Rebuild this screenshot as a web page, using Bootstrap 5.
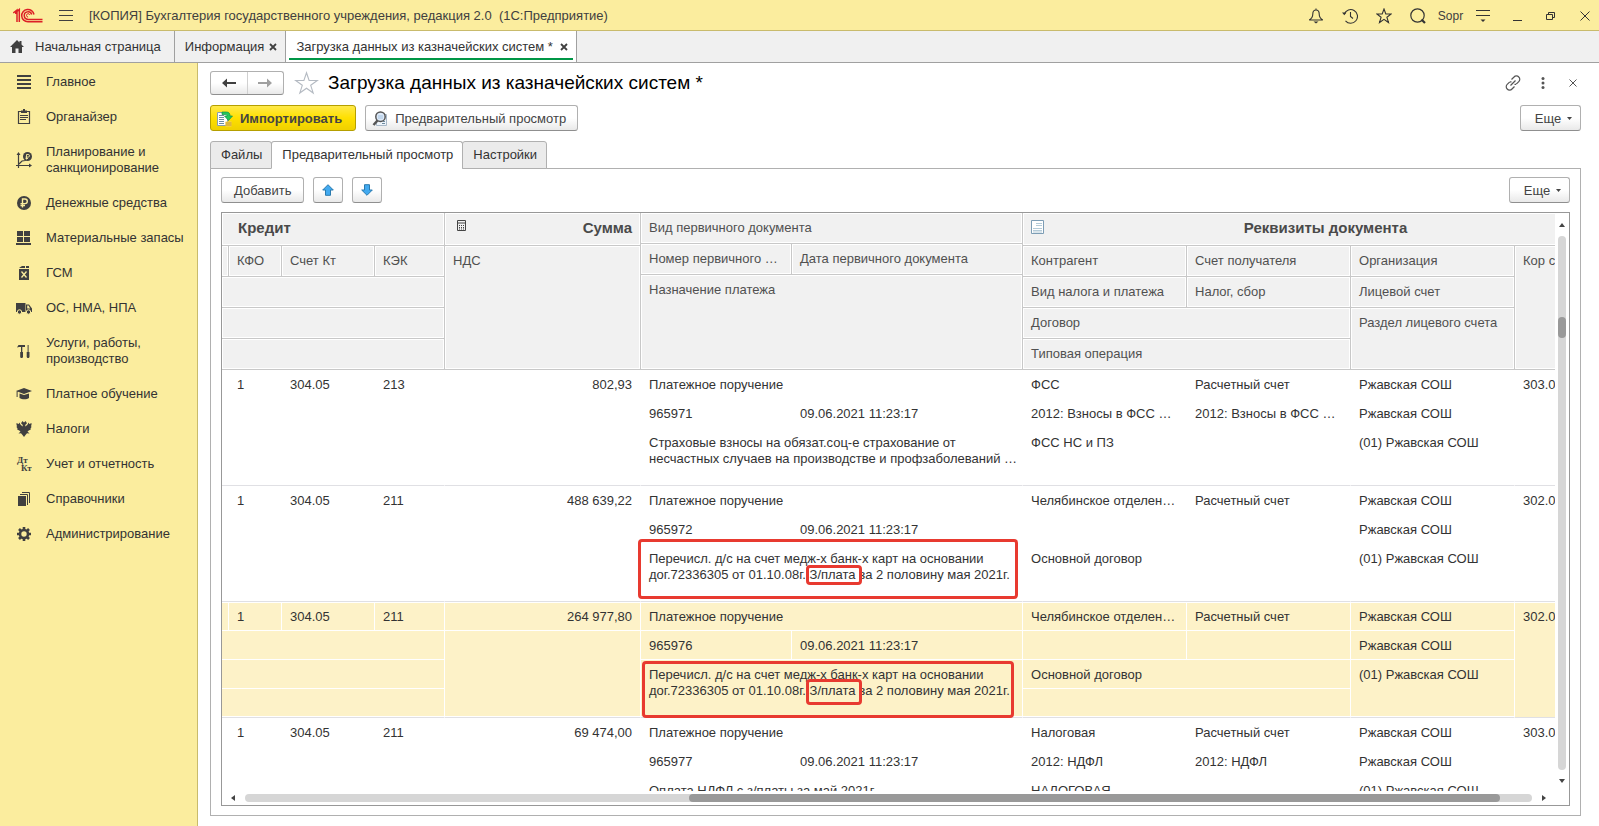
<!DOCTYPE html>
<html lang="ru">
<head>
<meta charset="utf-8">
<meta name="viewport" content="width=device-width, initial-scale=1">
<title>Загрузка данных из казначейских систем</title>
<link href="https://cdn.jsdelivr.net/npm/bootstrap@5.3.0/dist/css/bootstrap.min.css" rel="stylesheet">
<style>
  :root { --ink: #404040; --line: #a0a0a0; --soft: #c8c8c8; --yellow: #fbed9e; }
  body { font: 13px/16px "Liberation Sans", Arial, sans-serif; color: #333; background: #fff; }
  svg { display: block; flex: none; }
  button { font: inherit; color: inherit; }
  .plain { background: none; border: 0; padding: 0; }

  .topbar { height: 31px; background: var(--yellow); border-bottom: 1px solid #c9bb6c; padding: 1px 0 0 13px; color: var(--ink); }
  .topbar .tool { width: 34px; height: 30px; display: flex; align-items: center; justify-content: center; }
  .topbar .tool:last-child { width: 31px; padding-left: 3px; }
  .user { width: 31px; font-size: 12px; text-align: center; }

  .wintabs { height: 32px; background: #f0f0f0; border-bottom: 1px solid var(--line); }
  .wintabs a { display: flex; align-items: center; color: #333; text-decoration: none; border-right: 1px solid var(--line); padding: 0 8px 0 10px; gap: 5px; white-space: nowrap; }
  .wintabs a.home { padding-right: 13px; gap: 11px; }
  .wintabs a.current { background: #fff; position: relative; gap: 7px; }
  .wintabs a.current::after { content: ""; position: absolute; left: 3px; right: 3px; bottom: 2px; height: 2px; background: #009646; }

  .sections { width: 198px; background: var(--yellow); border-right: 1px solid #c9bb6c; padding-top: 2px; }
  .sections a { display: flex; align-items: center; gap: 14px; padding: 9px 8px 10px 16px; color: #333; text-decoration: none; }

  .workarea { padding: 8px 18px 10px 12px; min-width: 0; }
  .cmd { height: 26px; border: 1px solid #b0b0b0; border-bottom-color: #8f8f8f; border-radius: 3px; background: linear-gradient(#fff 50%, #e9e9e9); padding: 1px 12px 0; color: #444; display: inline-flex; align-items: center; justify-content: center; white-space: nowrap; }
  .cmd.withicon { padding: 1px 11px 0 6px; gap: 7px; }
  .cmd.main { background: linear-gradient(#ffe94a, #ffe000 50%, #efd000); border-color: #b59f00; font-weight: bold; padding-right: 13px; }
  .cmd.arrow { width: 30px; padding: 0; }
  .cmd.more { width: 61px; padding: 1px 0 0 6px; gap: 6px; }
  .cmd.navpair { height: 24px; width: 74px; padding: 0; }
  .bar { display: flex; flex-shrink: 0; gap: 9px; }
  .navpair button { flex: 1; height: 22px; display: flex; align-items: center; justify-content: center; }
  .navpair button + button { border-left: 1px solid #d0d0d0; }
  h1.form-title { font-size: 19px; line-height: 24px; font-weight: normal; color: #000; margin: 0; }
  .head-tools { margin-right: -7px; }
  .head-tools button { width: 30px; height: 24px; display: flex; align-items: center; justify-content: center; }

  .pages { margin-bottom: -1px; position: relative; }
  .pages button { height: 28px; border: 1px solid #b0b0b0; border-radius: 3px 3px 0 0; background: #ebebeb; padding: 0 9px 0 10px; color: #333; }
  .pages button + button { margin-left: -1px; }
  .pages button.current { background: #fff; border-bottom-color: #fff; }
  .page-body { border: 1px solid #b0b0b0; padding: 8px 10px 9px; min-height: 0; }

  .gridbox { border: 1px solid #989898; min-height: 0; margin-top: 9px; }
  .gridview { overflow: hidden; min-width: 0; }
  .vbar { width: 14px; padding: 10px 0 8px; align-items: center; }
  .vbar .track { width: 8px; border-radius: 4px; background: #d6d6d6; padding-top: 81px; margin: 9px 0; }
  .vbar .thumb { width: 8px; height: 21px; border-radius: 4px; background: #999; }
  .hbar { height: 14px; padding: 0 23px 0 9px; align-items: center; gap: 10px; }
  .hbar .track { height: 8px; border-radius: 4px; background: #d6d6d6; }
  .hbar .thumb { height: 8px; width: 63%; margin-left: 34.5%; border-radius: 4px; background: #999; }

  .docs { table-layout: fixed; width: 1386px; min-width: 100%; border-collapse: separate; border-spacing: 0; }
  .docs th, .docs td { vertical-align: top; text-align: left; white-space: nowrap; overflow: hidden; padding: 7px 0 0 8px; }
  .docs th { font-weight: normal; color: #505050; background: #f1f1f1; border: solid var(--soft); border-width: 0 1px 1px 0; box-shadow: inset 0 0 0 1px #fff; }
  .docs th.group { font-size: 15px; font-weight: bold; color: #4a4a4a; }
  .docs td { border: solid transparent; border-width: 0 1px 1px 0; }
  .docs td.num { text-align: right; padding-right: 8px; }
  .docs tbody tr { height: 29px; }
  .docs tbody td.low, .docs tbody tr:last-child td { border-bottom-color: #e0e0e4; }
  .docs .picked td { background: #fdf2c8; border-color: #fff; }
  .docs .picked tr:first-child td { box-shadow: inset 0 1px #fff; }
  .docs .picked td.low { box-shadow: inset 0 -1px #fff; }
  .docs td.noted { overflow: visible; position: relative; }
  .frame { position: absolute; border: 3px solid #e83a30; border-radius: 4px; z-index: 1; pointer-events: none; }
  .wide-a { left: -3px; right: 4px; top: -5px; bottom: 2px; }
  .wide-b { left: 1px; right: 8px; top: 1px; bottom: -1px; }
  .small-a { left: -4px; right: -6px; top: -2px; bottom: -3px; }
  .small-b { left: -4px; right: -6px; top: -4px; bottom: -7px; }
</style>
</head>
<body class="vh-100 overflow-hidden d-flex flex-column">

<header class="topbar d-flex align-items-center flex-shrink-0">
  <svg width="30" height="16" viewBox="0 0 30 16" fill="none" stroke="#dc1f26" stroke-width="1.5"><path d="M.3 5 4 2V14M2.800 6V4.500L6.300 1.500V14" /><path d="M21 6.500A6.200 6.200 0 1 0 15 13.800H29.500"/><path d="M18.700 6.500A3.800 3.800 0 1 0 15 11.400H29.500"/><path d="M16.800 6.800a1.700 1.700 0 1 0-1.700 2.300" stroke-width="1"/></svg>
  <button class="plain mx-3" aria-label="Меню"><svg width="14" height="12" viewBox="0 0 14 12" stroke="#404040" stroke-width="1"><path d="M0 .5h14M0 5.500h14M0 10.500h14"/></svg></button>
  <span class="text-nowrap">[КОПИЯ] Бухгалтерия государственного учреждения, редакция 2.0 &nbsp;(1С:Предприятие)</span>
  <div class="ms-auto d-flex align-items-center">
    <button class="plain tool" aria-label="Уведомления"><svg width="16" height="16" viewBox="0 0 16 16" fill="none" stroke="#333" stroke-width="1.1"><path d="M8 .5v1.500M8 2C5.800 2 4.800 3.800 4.800 6c0 3-1.300 4.800-3.600 6h13.600c-2.300-1.200-3.600-3-3.600-6 0-2.200-1-4-3.200-4z"/><path d="M5.500 13.500h5L8 15.500z" fill="#333" stroke="none"/></svg></button>
    <button class="plain tool" aria-label="История"><svg width="16" height="16" viewBox="0 0 16 16" fill="none" stroke="#333" stroke-width="1.1"><path d="M2.300 6A6.800 6.800 0 1 1 3.500 12.800M8.500 4v4.500l2.500 2"/><path d="M0 4.500h4.500L2.300 7.200z" fill="#333" stroke="none"/></svg></button>
    <button class="plain tool" aria-label="Избранное"><svg width="16" height="16" viewBox="0 0 16 16" fill="none" stroke="#333" stroke-width="1.1"><path d="m8 1 1.800 5h5.400l-4.300 3.200 1.600 5.300L8 11.300l-4.500 3.200 1.600-5.300L.8 6h5.400z"/></svg></button>
    <button class="plain tool" aria-label="Поиск"><svg width="16" height="16" viewBox="0 0 16 16" fill="none" stroke="#333" stroke-width="1.200"><circle cx="7.500" cy="7.500" r="6.700"/><path d="m11.500 11.500 3.500 3.500" stroke-width="2.200"/></svg></button>
    <span class="user">Sopr</span>
    <button class="plain tool" aria-label="Настройки окна"><svg width="14" height="14" viewBox="0 0 14 14"><path d="M0 1.500h14M0 6.500h14" stroke="#333" stroke-width="1.200"/><path d="M4.500 10.500h5L7 13z" fill="#333"/></svg></button>
    <button class="plain tool" aria-label="Свернуть"><svg width="9" height="10" viewBox="0 0 9 10"><path d="M0 9.500h9" stroke="#333"/></svg></button>
    <button class="plain tool" aria-label="Восстановить"><svg width="10" height="10" viewBox="0 0 10 10" fill="none" stroke="#333"><path d="M.5 3.500h6v5h-6zM2.500 3.500v-2h6v5h-2"/></svg></button>
    <button class="plain tool" aria-label="Закрыть"><svg width="10" height="10" viewBox="0 0 10 10"><path d="m.5.5 9 9m0-9-9 9" stroke="#333"/></svg></button>
  </div>
</header>

<nav class="wintabs d-flex flex-shrink-0" aria-label="Открытые окна">
  <a href="#" class="home"><svg width="14" height="13" viewBox="0 0 14 13" fill="#404040"><path d="M7 0 0 7h2v6h3.500V8.500h3V13H12V7h2L11.500 4.500V1h-2v1.500z"/></svg>Начальная страница</a>
  <a href="#">Информация <svg width="8" height="8" viewBox="0 0 8 8"><path d="m1 1 6 6m0-6L1 7" stroke="#404040" stroke-width="1.800"/></svg></a>
  <a href="#" class="current">Загрузка данных из казначейских систем * <svg width="8" height="8" viewBox="0 0 8 8"><path d="m1 1 6 6m0-6L1 7" stroke="#404040" stroke-width="1.800"/></svg></a>
</nav>

<div class="d-flex flex-grow-1" style="min-height:0">
  <nav class="sections flex-shrink-0" aria-label="Разделы">
    <a href="#"><svg width="16" height="16" viewBox="0 0 16 16" stroke="#404040" stroke-width="2"><path d="M1 2h14M1 6h14M1 10h14M1 14h14"/></svg>Главное</a>
    <a href="#"><svg width="16" height="16" viewBox="0 0 16 16" fill="none" stroke="#404040"><path d="M2.500 2.500h11v12h-11z" stroke-width="1.200"/><path d="M4 6.500h8M4 8.500h8M4 10.500h6"/><path d="M5 1.500h6V4H5z" fill="#404040" stroke="none"/><path d="M8 0v2" stroke-width="2"/></svg>Органайзер</a>
    <a href="#"><svg width="16" height="16" viewBox="0 0 16 16" fill="none" stroke="#404040" stroke-width="1.200"><path d="M2.500 16V2M0 13.500h14M3 12l3-3 3-.500 2-2"/><path d="M.5 3h4l-2-3zM13 11.500v4l3-2z" fill="#404040" stroke="none"/><circle cx="11.500" cy="4.500" r="4.500" fill="#404040" stroke="none"/><path d="M10.500 7.500v-5h1.700a1.200 1.200 0 0 1 0 2.600H9.500M9.500 6.500h2.500" stroke="#fbed9e" stroke-width=".9"/></svg>Планирование и<br>санкционирование</a>
    <a href="#"><svg width="16" height="16" viewBox="0 0 16 16" fill="none"><circle cx="8" cy="8" r="7" fill="#404040"/><path d="M6.500 12.500V4H9a2.300 2.300 0 0 1 0 4.600H4.500M4.500 10.500H9" stroke="#fbed9e" stroke-width="1.400"/></svg>Денежные средства</a>
    <a href="#"><svg width="16" height="16" viewBox="0 0 16 16" fill="#404040"><path d="M1 1h6v5H1zM8 1h6v5H8zM1 7h6v5H1zM8 7h6v5H8zM0 13h15v2H0z"/></svg>Материальные запасы</a>
    <a href="#"><svg width="16" height="16" viewBox="0 0 16 16"><path d="M3 4h10v11H3zM3 3l3-2h3v2zM10 1h3v2h-3z" fill="#404040"/><path d="m5.500 6.500 5 6m0-6-5 6" stroke="#fbed9e" stroke-width="1.300"/></svg>ГСМ</a>
    <a href="#"><svg width="16" height="16" viewBox="0 0 16 16" fill="#404040"><path d="M0 3h9.500v9H0z"/><path d="M10 4.500h3l3 4V12h-6zm1.200 1v3h3L12.500 5.500z" fill-rule="evenodd"/><circle cx="3.500" cy="12" r="2.200" stroke="#fbed9e"/><circle cx="12.500" cy="12" r="2.200" stroke="#fbed9e"/></svg>ОС, НМА, НПА</a>
    <a href="#"><svg width="16" height="16" viewBox="0 0 16 16" fill="#404040"><path d="M1 4.500 2.500 2H9v2H6.300v5H5V4H3zM4.200 9h2.800v5l-.7 1H4.800l-.6-1zM11.600 2h1v7h-1zM10.700 9h2.800v5l-.7 1h-1.400l-.7-1z"/></svg>Услуги, работы,<br>производство</a>
    <a href="#"><svg width="16" height="16" viewBox="0 0 16 16" fill="#404040"><path d="m8 2 8 3-8 3-8-3zM3.500 7.500 8 9l5-1.500V12c-2 1.800-7 1.800-9.500 0zM.6 5.500h1V11h-1z"/></svg>Платное обучение</a>
    <a href="#"><svg width="16" height="16" viewBox="0 0 16 16" fill="#404040"><path d="M8 1.500 9.500 0 11 2.200 9.200 4l.3 1.500L12 3V1.500L13.500 3 15.500 2v2l-.5 1 .5 1-1 1.500.3 1-2 1-1.300 1 2 2-2.500-.300L9.500 14 8 16l-1.500-2-1.500-1.800-2.500.3 2-2-1.300-1-2-1 .3-1L.5 6 1 5 .5 4V2l2 1L4 1.500V3l2.500 2.500L6.800 4 5 2.200 6.500 0z"/></svg>Налоги</a>
    <a href="#"><svg width="16" height="16" viewBox="0 0 16 16" fill="#404040" font-family="Liberation Serif, serif" font-weight="bold" font-size="9"><text x="1" y="7">Дт</text><text x="5" y="15">Кт</text></svg>Учет и отчетность</a>
    <a href="#"><svg width="16" height="16" viewBox="0 0 16 16" fill="none" stroke="#404040"><path d="M2 5h8v10H2z" fill="#404040" stroke="none"/><path d="M4 3.500h7.500V14M6 1.500h7.500V12"/></svg>Справочники</a>
    <a href="#"><svg width="16" height="16" viewBox="0 0 16 16" fill="none" stroke="#404040"><circle cx="8" cy="8" r="4" stroke-width="2.600"/><path d="M8 1v2.500M8 12.500V15M1 8h2.500M12.500 8H15M3 3l2 2M11 11l2 2M13 3l-2 2M5 11l-2 2" stroke-width="2.600"/></svg>Администрирование</a>
  </nav>

  <main class="workarea flex-grow-1 d-flex flex-column">
    <div class="d-flex align-items-center flex-shrink-0">
      <div class="cmd navpair">
        <button class="plain" aria-label="Назад"><svg width="14" height="10" viewBox="0 0 14 10" fill="#404040"><path d="M0 5 5 .5V4h9v2H5v3.500z"/></svg></button>
        <button class="plain" aria-label="Вперед"><svg width="14" height="10" viewBox="0 0 14 10" fill="#a0a0a0"><path d="M14 5 9 .5V4H0v2h9v3.500z"/></svg></button>
      </div>
      <button class="plain mx-2" aria-label="В избранное"><svg width="28" height="24" viewBox="0 0 28 24" fill="none" stroke="#b4bac2" stroke-width="1.100"><path d="m14.500 1.800 2.600 7.700h8.200l-6.600 4.800 2.500 7.700-6.700-4.800L7.800 22l2.500-7.700-6.600-4.800h8.200z"/></svg></button>
      <h1 class="form-title text-nowrap">Загрузка данных из казначейских систем *</h1>
      <div class="head-tools ms-auto d-flex">
        <button class="plain" aria-label="Ссылка"><svg width="16" height="16" viewBox="0 0 16 16" fill="none" stroke="#555" stroke-width="1.200"><path d="M6.500 4.500 9 2a3.200 3.200 0 0 1 4.800 0 3.200 3.200 0 0 1 0 4.600l-2.600 2.600M9.500 11.500 7 14a3.200 3.200 0 0 1-4.800 0 3.200 3.200 0 0 1 0-4.600l2.600-2.600M5.500 10.500l5-5M9.500 9.300l1.500.100M5 6.800l1.500.100"/></svg></button>
        <button class="plain" aria-label="Действия"><svg width="4" height="12" viewBox="0 0 4 12" fill="#555"><circle cx="2" cy="1.600" r="1.500"/><circle cx="2" cy="6" r="1.500"/><circle cx="2" cy="10.400" r="1.500"/></svg></button>
        <button class="plain" aria-label="Закрыть форму"><svg width="8" height="8" viewBox="0 0 8 8"><path d="m.5.5 7 7m0-7-7 7" stroke="#555"/></svg></button>
      </div>
    </div>

    <div class="bar" style="padding:10px 0">
      <button class="cmd withicon main"><svg width="16" height="16" viewBox="0 0 16 16"><path d="M.5 1.500h10v13H.5z" fill="#fff" stroke="#8aa0b0"/><path d="M2 4.500h5M2 6.500h5M2 8.500h5M2 10.500h5M2 12.500h5" stroke="#6d8ba0"/><path d="M5 1h4.500c2.500 0 3.500 1.500 3.500 4h2.500L11.500 9.500 7.500 5H10c0-1.200-.5-1.500-2-1.500H5z" fill="#23c85a" stroke="#12904a" stroke-width=".7"/><path d="M8.500 10.500h6v5h-6z" fill="#f6d35c"/><path d="M8.500 12h6M8.500 14h6" stroke="#c79a1c"/></svg>Импортировать</button>
      <button class="cmd withicon"><svg width="16" height="16" viewBox="0 0 16 16" fill="none"><path d="M4.500 3.500h10v11h-10z" fill="#eef4fa" stroke="#a8b8c8"/><path d="M10 12.500h3M11 10.500h2" stroke="#6d8ba0"/><circle cx="8.500" cy="5.700" r="4.700" fill="#dce9f8" stroke="#555" stroke-width="1.500"/><path d="M6 5h5M6 7h5" stroke="#a8c4e0"/><path d="m5.500 9.500-4 4.500" stroke="#555" stroke-width="2.500"/></svg>Предварительный просмотр</button>
      <button class="cmd more ms-auto">Еще <svg width="5" height="3" viewBox="0 0 5 3"><path d="M0 0h5L2.500 3z" fill="#444"/></svg></button>
    </div>

    <div class="pages d-flex flex-shrink-0" role="tablist">
      <button role="tab">Файлы</button>
      <button role="tab" class="current" aria-selected="true">Предварительный просмотр</button>
      <button role="tab">Настройки</button>
    </div>

    <section class="page-body flex-grow-1 d-flex flex-column">
      <div class="bar">
        <button class="cmd">Добавить</button>
        <button class="cmd arrow" aria-label="Вверх"><svg width="12" height="12" viewBox="0 0 12 12"><path d="m6 .7 5.300 5.300H8.500v5.300h-5V6H.7z" fill="#42aaf0" stroke="#2a7aae"/></svg></button>
        <button class="cmd arrow" aria-label="Вниз"><svg width="12" height="12" viewBox="0 0 12 12"><path d="M6 11.300.7 6h2.800V.7h5V6h2.800z" fill="#42aaf0" stroke="#2a7aae"/></svg></button>
        <button class="cmd more ms-auto">Еще <svg width="5" height="3" viewBox="0 0 5 3"><path d="M0 0h5L2.500 3z" fill="#444"/></svg></button>
      </div>

      <div class="gridbox flex-grow-1 d-flex flex-column">
        <div class="d-flex flex-grow-1" style="min-height:0">
          <div class="gridview flex-grow-1">
            <table class="docs">
              <colgroup><col style="width:7px"><col style="width:53px"><col style="width:93px"><col style="width:70px"><col style="width:196px"><col style="width:151px"><col style="width:231px"><col style="width:164px"><col style="width:164px"><col style="width:164px"><col></colgroup>
              <thead>
                <tr style="height:31px"><th class="group" colspan="4" rowspan="2"><span class="ps-2">Кредит</span></th><th class="group" rowspan="2"><div class="d-flex align-items-start justify-content-between pe-2"><svg class="ms-1" width="9" height="11" viewBox="0 0 9 11" fill="none" stroke="#444"><path d="M.5.5h8v10h-8zM.5 3h8"/><path d="M2 5.500h5M2 7.500h5M2 9h5" stroke-dasharray="1 1"/></svg>Сумма</div></th><th colspan="2">Вид первичного документа</th><th class="group" colspan="4" rowspan="2"><div class="d-flex"><svg width="13" height="15" viewBox="0 0 13 15"><path d="M.5.500h12v13H.5z" fill="#fff" stroke="#7d9db5"/><path d="M5 3.500h6M5 5.500h6M2 8.500h9M2 10.500h9M2 12h9" stroke="#b4cbd8"/></svg><span class="flex-grow-1 text-center">Реквизиты документа</span></div></th></tr>
                <tr style="height:2px"><th rowspan="2">Номер первичного …</th><th rowspan="2">Дата первичного документа</th></tr>
                <tr style="height:29px"><th rowspan="2"></th><th rowspan="2">КФО</th><th rowspan="2">Счет Кт</th><th rowspan="2">КЭК</th><th rowspan="5">НДС</th><th rowspan="2">Контрагент</th><th rowspan="2">Счет получателя</th><th rowspan="2">Организация</th><th rowspan="5">Кор с</th></tr>
                <tr style="height:2px"><th colspan="2" rowspan="4">Назначение платежа</th></tr>
                <tr style="height:31px"><th colspan="4"></th><th>Вид налога и платежа</th><th>Налог, сбор</th><th>Лицевой счет</th></tr>
                <tr style="height:31px"><th colspan="4"></th><th colspan="2">Договор</th><th rowspan="2">Раздел лицевого счета</th></tr>
                <tr style="height:31px"><th colspan="4"></th><th colspan="2">Типовая операция</th></tr>
              </thead>
              <tbody>
                <tr><td></td><td>1</td><td>304.05</td><td>213</td><td class="num">802,93</td><td colspan="2">Платежное поручение</td><td>ФСС</td><td>Расчетный счет</td><td>Ржавская СОШ</td><td class="low" rowspan="4">303.0</td></tr>
                <tr><td colspan="4"></td><td class="low" rowspan="3"></td><td>965971</td><td>09.06.2021 11:23:17</td><td>2012: Взносы в ФСС …</td><td>2012: Взносы в ФСС …</td><td>Ржавская СОШ</td></tr>
                <tr><td colspan="4"></td><td class="low" colspan="2" rowspan="2">Страховые взносы на обязат.соц-е страхование от<br>несчастных случаев на производстве и профзаболеваний …</td><td colspan="2">ФСС НС и ПЗ</td><td class="low" rowspan="2">(01) Ржавская СОШ</td></tr>
                <tr><td colspan="4"></td><td colspan="2"></td></tr>
              </tbody>
              <tbody>
                <tr><td></td><td>1</td><td>304.05</td><td>211</td><td class="num">488 639,22</td><td colspan="2">Платежное поручение</td><td>Челябинское отделен…</td><td>Расчетный счет</td><td>Ржавская СОШ</td><td class="low" rowspan="4">302.0</td></tr>
                <tr><td colspan="4"></td><td class="low" rowspan="3"></td><td>965972</td><td>09.06.2021 11:23:17</td><td></td><td></td><td>Ржавская СОШ</td></tr>
                <tr><td colspan="4"></td><td class="low noted" colspan="2" rowspan="2">Перечисл. д/с на счет медж-х банк-х карт на основании<br>дог.72336305 от 01.10.08г. <span class="position-relative">З/плата<i class="frame small-a"></i></span> за 2 половину мая 2021г.<i class="frame wide-a"></i></td><td colspan="2">Основной договор</td><td class="low" rowspan="2">(01) Ржавская СОШ</td></tr>
                <tr><td colspan="4"></td><td colspan="2"></td></tr>
              </tbody>
              <tbody class="picked">
                <tr><td></td><td>1</td><td>304.05</td><td>211</td><td class="num">264 977,80</td><td colspan="2">Платежное поручение</td><td>Челябинское отделен…</td><td>Расчетный счет</td><td>Ржавская СОШ</td><td class="low" rowspan="4">302.0</td></tr>
                <tr><td colspan="4"></td><td class="low" rowspan="3"></td><td>965976</td><td>09.06.2021 11:23:17</td><td></td><td></td><td>Ржавская СОШ</td></tr>
                <tr><td colspan="4"></td><td class="low noted" colspan="2" rowspan="2">Перечисл. д/с на счет медж-х банк-х карт на основании<br>дог.72336305 от 01.10.08г. <span class="position-relative">З/плата<i class="frame small-b"></i></span> за 2 половину мая 2021г.<i class="frame wide-b"></i></td><td colspan="2">Основной договор</td><td class="low" rowspan="2">(01) Ржавская СОШ</td></tr>
                <tr><td class="low" colspan="4"></td><td class="low" colspan="2"></td></tr>
              </tbody>
              <tbody>
                <tr><td></td><td>1</td><td>304.05</td><td>211</td><td class="num">69 474,00</td><td colspan="2">Платежное поручение</td><td>Налоговая</td><td>Расчетный счет</td><td>Ржавская СОШ</td><td class="low" rowspan="4">303.0</td></tr>
                <tr><td colspan="4"></td><td class="low" rowspan="3"></td><td>965977</td><td>09.06.2021 11:23:17</td><td>2012: НДФЛ</td><td>2012: НДФЛ</td><td>Ржавская СОШ</td></tr>
                <tr><td colspan="4"></td><td class="low" colspan="2" rowspan="2">Оплата НДФЛ с з/платы за май 2021г.</td><td colspan="2">НАЛОГОВАЯ</td><td class="low" rowspan="2">(01) Ржавская СОШ</td></tr>
                <tr><td colspan="4"></td><td colspan="2"></td></tr>
              </tbody>
            </table>
          </div>
          <div class="vbar flex-shrink-0 d-flex flex-column">
            <svg width="6" height="4" viewBox="0 0 6 4"><path d="M0 4h6L3 0z" fill="#444"/></svg>
            <div class="track flex-grow-1"><div class="thumb"></div></div>
            <svg width="6" height="4" viewBox="0 0 6 4"><path d="M0 0h6L3 4z" fill="#444"/></svg>
          </div>
        </div>
        <div class="hbar flex-shrink-0 d-flex">
          <svg width="4" height="6" viewBox="0 0 4 6"><path d="M4 0v6L0 3z" fill="#444"/></svg>
          <div class="track flex-grow-1"><div class="thumb"></div></div>
          <svg width="4" height="6" viewBox="0 0 4 6"><path d="M0 0v6l4-3z" fill="#444"/></svg>
        </div>
      </div>
    </section>
  </main>
</div>

<script src="https://cdn.jsdelivr.net/npm/bootstrap@5.3.0/dist/js/bootstrap.bundle.min.js"></script>
</body>
</html>
